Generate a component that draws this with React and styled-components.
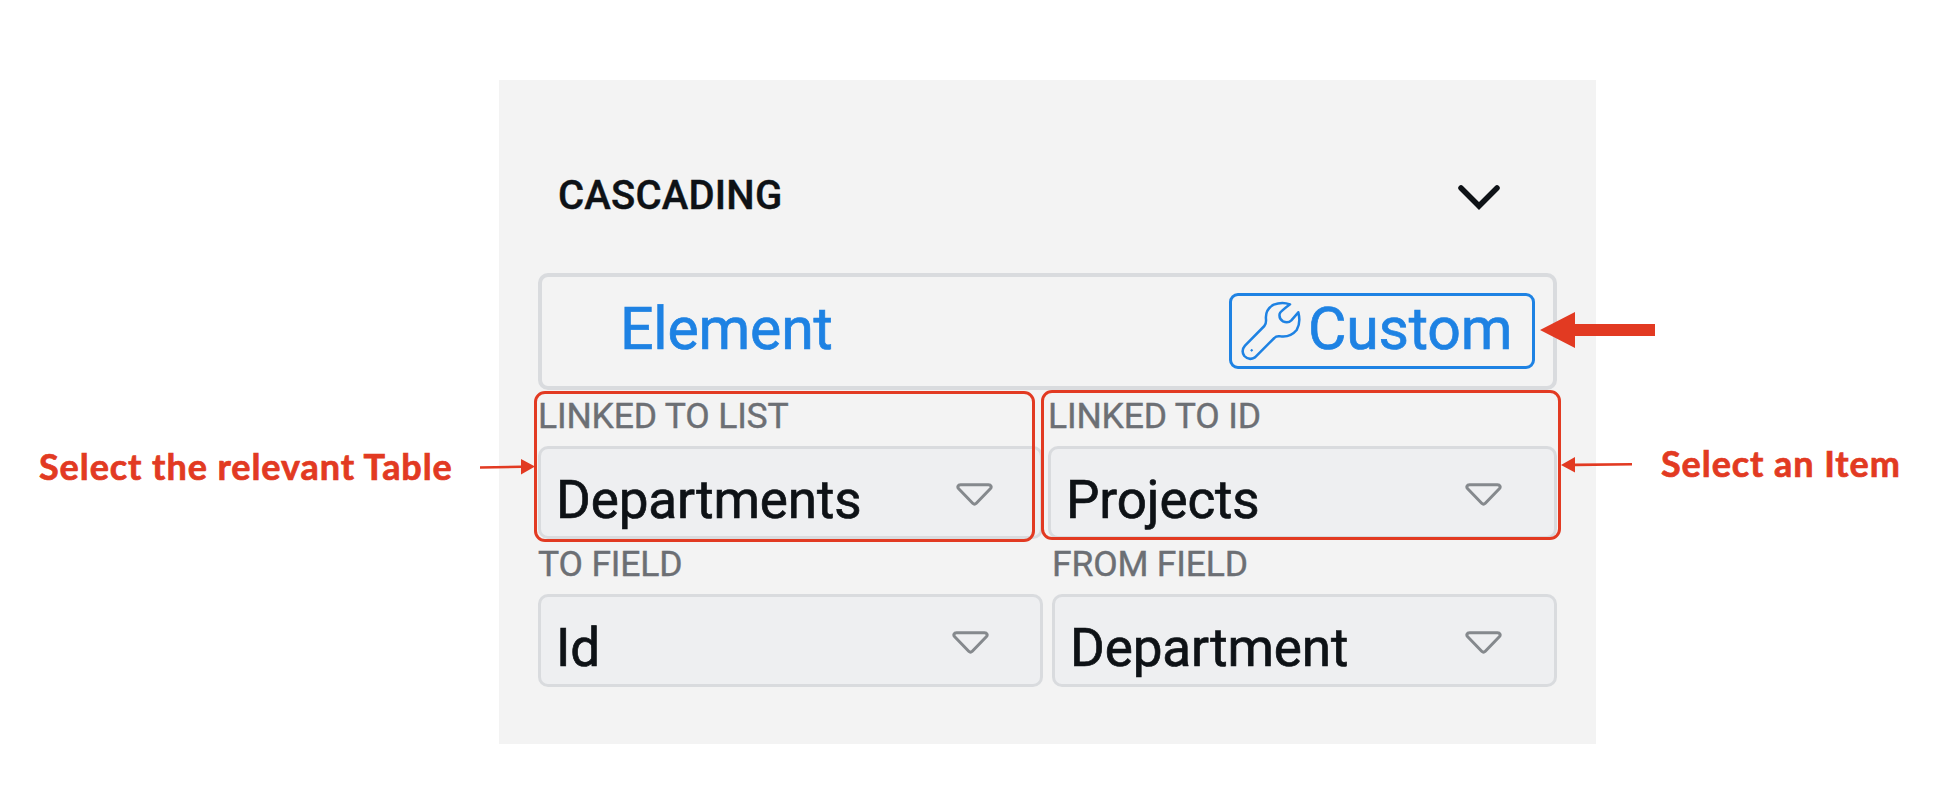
import React from "react";
import styled, { createGlobalStyle } from "styled-components";

const RED = "#e23a22";
const BLUE = "#1e82e3";

const GlobalStyle = createGlobalStyle`
  * { box-sizing: border-box; }
  body { margin: 0; background: #fff; }
`;

const Page = styled.div`
  position: relative;
  display: flex;
  width: 1940px;
  height: 810px;
  overflow: hidden;
  background: #fff;
  font-family: Roboto, "Liberation Sans", sans-serif;
`;

const Note = styled.div`
  width: ${(p) => p.$width}px;
  padding: ${(p) => p.$top}px 0 0 ${(p) => p.$left}px;
  font: 700 36px/40px Lato, "Open Sans", sans-serif;
  letter-spacing: 0.93px;
  -webkit-text-stroke: 0.7px ${RED};
  color: ${RED};
  white-space: nowrap;
`;

const Panel = styled.main`
  width: 1097px;
  height: 664px;
  margin-top: 80px;
  padding: 0 39px;
  background: #f3f3f3;
`;

const Header = styled.header`
  display: flex;
  align-items: center;
  justify-content: space-between;
  height: 193px;
  padding: 38px 57px 0 20px;
`;

const Title = styled.h2`
  margin: 0;
  font-size: 40px;
  line-height: 48px;
  font-weight: 500;
  letter-spacing: 0.2px;
  -webkit-text-stroke: 0.4px #0e1216;
  color: #0e1216;
`;

const Chevron = styled.svg`
  margin-top: 3px;
`;

const ModeBar = styled.div`
  display: flex;
  align-items: flex-start;
  justify-content: space-between;
  height: 117px;
  padding: 16px 18px 0 78px;
  border: 4px solid #d9dbde;
  border-radius: 10px;
`;

const ModeLabel = styled.span`
  margin-top: ${(p) => p.$shift || 0}px;
  font-size: 59px;
  line-height: 70px;
  letter-spacing: -0.2px;
  -webkit-text-stroke: 0.7px ${BLUE};
  color: ${BLUE};
  white-space: nowrap;
`;

const CustomButton = styled.div`
  display: flex;
  align-items: flex-start;
  gap: 7px;
  width: 306px;
  height: 76px;
  padding: 0 0 0 9px;
  border: 3px solid ${BLUE};
  border-radius: 9px;
`;

const WrenchIcon = styled.svg`
  flex: none;
  width: 60px;
  height: 60px;
  margin-top: 5px;
`;

const FieldRow = styled.div`
  display: grid;
  grid-template-columns: ${(p) => p.$columns};
  column-gap: ${(p) => p.$gap}px;
  height: 148px;
`;

const Field = styled.div`
  display: flex;
  flex-direction: column;
`;

const FieldLabel = styled.label`
  height: 56px;
  padding: 5px 0 0;
  font-size: 35.5px;
  line-height: 42px;
  letter-spacing: -0.17px;
  -webkit-text-stroke: 0.4px #6c6f74;
  color: #6c6f74;
  white-space: nowrap;
`;

const SelectBox = styled.div`
  display: flex;
  align-items: flex-start;
  justify-content: space-between;
  height: 93px;
  padding: 20px ${(p) => p.$right}px 0 15px;
  border: 3px solid #d9dbde;
  border-radius: 10px;
  background: #eeeff1;
`;

const Value = styled.span`
  font-size: 53px;
  line-height: 62px;
  letter-spacing: -0.1px;
  -webkit-text-stroke: 0.7px #0e1216;
  color: #0e1216;
  white-space: nowrap;
`;

const CaretIcon = styled.svg`
  flex: none;
  width: 37px;
  height: 23px;
  margin-top: 14px;
`;

const Outline = styled.div`
  position: absolute;
  left: ${(p) => p.$x}px;
  top: ${(p) => p.$y}px;
  width: ${(p) => p.$w}px;
  height: ${(p) => p.$h}px;
  border: 3px solid ${RED};
  border-radius: 11px;
`;

const Pointer = styled.svg`
  position: absolute;
  left: ${(p) => p.$x}px;
  top: ${(p) => p.$y}px;
`;

const Caret = () => (
  <CaretIcon viewBox="0 0 37 23" fill="none" stroke="#85898d" strokeWidth="3" strokeLinejoin="round">
    <path d="M4.5 1.8H32.5C35 1.8 36 4 34.3 5.8L20.3 20.2Q18.5 22 16.7 20.2L2.7 5.8C1 4 2 1.8 4.5 1.8Z" />
  </CaretIcon>
);

const Wrench = () => (
  <WrenchIcon viewBox="64 63 180 180" fill="none" stroke={BLUE} strokeWidth="7.5" strokeLinejoin="round">
    <path d="M211 73Q187 64 162 74Q136 88 139 118Q140 132 134 138L76 197Q63 212 74 228Q88 243 106 232L164 174Q170 167 182 169Q212 173 231 150Q244 128 236 97L215 121Q205 131 190 124Q177 116 180 101Q181 96 211 73Z" />
    <circle cx="96" cy="211" r="2.5" fill={BLUE} strokeWidth="3" />
  </WrenchIcon>
);

function SelectField({ label, value, right }) {
  return (
    <Field>
      <FieldLabel>{label}</FieldLabel>
      <SelectBox $right={right}>
        <Value>{value}</Value>
        <Caret />
      </SelectBox>
    </Field>
  );
}

export default function App() {
  return (
    <Page>
      <GlobalStyle />
      <Note $width={499} $top={446} $left={39}>Select the relevant Table</Note>
      <Panel>
        <Header>
          <Title>CASCADING</Title>
          <Chevron width="42" height="26" viewBox="0 0 42 26" fill="none" stroke="#0e1216" strokeWidth="5.5" strokeLinecap="round">
            <path d="M3 4L21 22L39 4" />
          </Chevron>
        </Header>
        <ModeBar>
          <ModeLabel $shift={1}>Element</ModeLabel>
          <CustomButton>
            <Wrench />
            <ModeLabel $shift={-2}>Custom</ModeLabel>
          </CustomButton>
        </ModeBar>
        <FieldRow $columns="505px 509px" $gap={5}>
          <SelectField label="LINKED TO LIST" value="Departments" right={47} />
          <SelectField label="LINKED TO ID" value="Projects" right={52} />
        </FieldRow>
        <FieldRow $columns="505px 505px" $gap={9}>
          <SelectField label="TO FIELD" value="Id" right={51} />
          <SelectField label="FROM FIELD" value="Department" right={52} />
        </FieldRow>
      </Panel>
      <Note $width={344} $top={443} $left={65}>Select an Item</Note>

      <Outline $x={534} $y={391} $w={501} $h={151} />
      <Outline $x={1041} $y={390} $w={520} $h={150} />
      <Pointer $x={1540} $y={312} width="115" height="36" fill={RED}>
        <path d="M0 18L35 0V12H115V24H35V36Z" />
      </Pointer>
      <Pointer $x={480} $y={459} width="55" height="16" fill={RED}>
        <path d="M0 7.3L41 6.5V0L55 7.5L41 15.5V9L0 9.8Z" />
      </Pointer>
      <Pointer $x={1561} $y={457} width="71" height="16" fill={RED}>
        <path d="M0 8L14 0V6.5L71 6V8.6L14 9.3V15.5Z" />
      </Pointer>
    </Page>
  );
}
